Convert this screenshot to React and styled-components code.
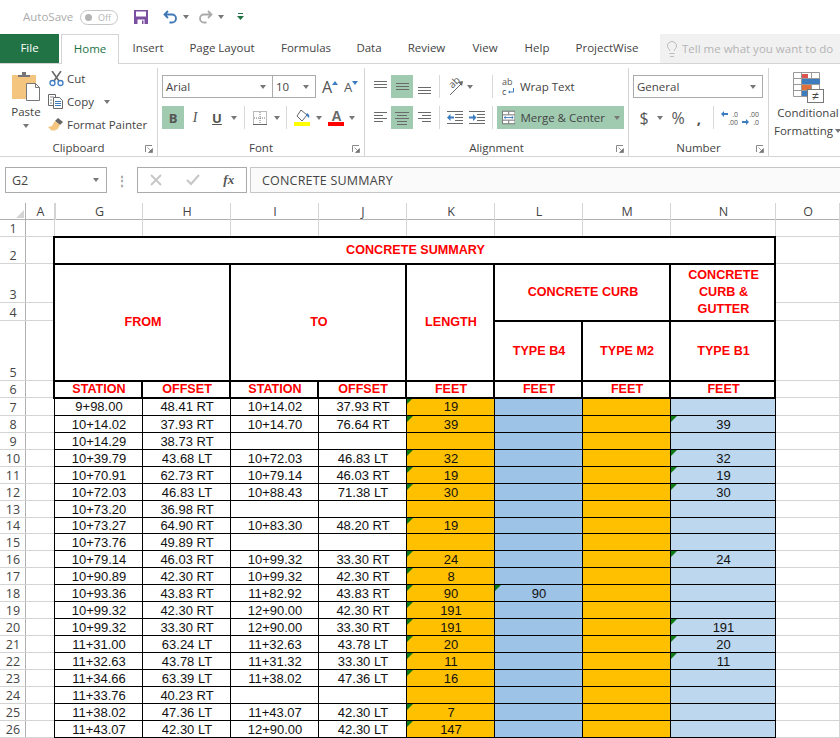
import React from 'react'
import styled, { createGlobalStyle } from 'styled-components'
import { Lightbulb } from 'lucide-react'

const GlobalStyle = createGlobalStyle`
  html, body {
    margin: 0;
    padding: 0;
    background: #fff;
    overflow: hidden;
  }
  body {
    font-family: "Open Sans", "Noto Sans", sans-serif;
    font-size: 11.5px;
    color: #444;
  }
`

const Page = styled.div`
  width: 840px;
  height: 738px;
  overflow: hidden;
  display: flex;
  flex-direction: column;
`

/* ---- quick access bar ---- */
const QuickBar = styled.div`
  height: 34px;
  display: flex;
  align-items: center;
  padding-left: 23px;
`
const AutoSave = styled.span`
  color: #ababab;
  font-size: 11.5px;
  width: 57px;
  padding-bottom: 2px;
`
const Toggle = styled.div`
  width: 38px;
  height: 15px;
  border: 1px solid #c6c6c6;
  border-radius: 8px;
  display: flex;
  align-items: center;
  justify-content: space-between;
  padding: 0 6px 0 4px;
  box-sizing: border-box;
  color: #b4b4b4;
  font-size: 9px;
  &::before {
    content: '';
    width: 7px;
    height: 7px;
    border-radius: 50%;
    background: #b4b4b4;
  }
`
const QuickIcon = styled.div`
  width: ${p => p.$w}px;
  margin-left: ${p => p.$ml || 0}px;
  display: flex;
  justify-content: center;
`

/* ---- tabs ---- */
const TabBar = styled.div`
  height: 30px;
  display: flex;
  box-sizing: border-box;
  border-bottom: 1px solid #d4d4d4;
`
const FileTab = styled.div`
  width: 59px;
  height: 29px;
  margin-right: 2px;
  padding-bottom: 2px;
  box-sizing: border-box;
  background: #217346;
  color: #fff;
  display: flex;
  align-items: center;
  justify-content: center;
`
const HomeTab = styled.div`
  width: 58px;
  height: 30px;
  padding-bottom: 2px;
  box-sizing: border-box;
  border: 1px solid #d4d4d4;
  border-bottom: none;
  background: #fff;
  color: #217346;
  display: flex;
  align-items: center;
  justify-content: center;
  margin-right: 1px;
`
const Tab = styled.div`
  width: ${p => p.$w}px;
  padding-bottom: 2px;
  box-sizing: border-box;
  display: flex;
  align-items: center;
  justify-content: center;
  color: #444;
  white-space: nowrap;
`
const TellMe = styled.div`
  margin-left: 9px;
  flex: 1;
  background: #f1f1f1;
  color: #b4b4b4;
  display: flex;
  align-items: center;
  gap: 1px;
  padding-left: 3px;
  white-space: nowrap;
  overflow: hidden;
`

/* ---- ribbon ---- */
const Ribbon = styled.div`
  height: 93px;
  box-sizing: border-box;
  display: flex;
  border-bottom: 1px solid #d4d4d4;
`
const Group = styled.div`
  position: relative;
  width: ${p => p.$w}px;
  box-sizing: border-box;
  height: 88px;
  margin-top: 4px;
  padding-left: ${p => p.$pl || 0}px;
  padding-top: ${p => p.$pt ?? 7}px;
  border-right: ${p => (p.$last ? 'none' : '1px solid #d4d4d4')};
  overflow: ${p => (p.$last ? 'hidden' : 'visible')};
`
const GroupLabel = styled.div`
  position: absolute;
  left: 0;
  right: 0;
  top: 72px;
  line-height: 16px;
  text-align: center;
  color: #444;
`
const Launcher = styled.svg`
  position: absolute;
  right: 4px;
  top: 77px;
`
const ClipBody = styled.div`
  display: flex;
`
const PasteCol = styled.div`
  width: 38px;
  margin-right: 3px;
  padding-top: 3px;
  display: flex;
  flex-direction: column;
  align-items: center;
`
const PasteText = styled.div`
  margin-top: 2px;
  line-height: 18px;
  margin-bottom: 3px;
`
const SmallCol = styled.div`
  display: flex;
  flex-direction: column;
`
const SmallItem = styled.div`
  height: 23px;
  padding-bottom: 2px;
  box-sizing: border-box;
  display: flex;
  align-items: center;
  gap: 3px;
  white-space: nowrap;
`
const SmallIcon = styled.div`
  width: 16px;
  display: flex;
  justify-content: center;
`
const Rows = styled.div`
  display: flex;
  flex-direction: column;
  gap: 8px;
`
const ToolRow = styled.div`
  height: 23px;
  display: flex;
  align-items: center;
`
const Combo = styled.div`
  width: ${p => p.$w}px;
  height: 23px;
  box-sizing: border-box;
  border: 1px solid #ababab;
  margin-left: ${p => p.$ml || 0}px;
  display: flex;
  align-items: center;
  justify-content: space-between;
  padding: 0 5px 0 3px;
  background: #fff;
`
const Tool = styled.div`
  width: ${p => p.$w || 22}px;
  height: 23px;
  margin-left: ${p => p.$ml || 0}px;
  display: flex;
  align-items: center;
  justify-content: center;
  flex-shrink: 0;
  background: ${p => (p.$active ? '#a0cbb1' : 'transparent')};
  color: #444;
  white-space: nowrap;
`
const LabelTool = styled(Tool)`
  justify-content: flex-start;
  gap: 5px;
  padding-left: 5px;
  box-sizing: border-box;
`
const Letter = styled.span`
  font-family: "Liberation Serif", "Noto Sans", serif;
  font-size: ${p => p.$size || 14}px;
  font-weight: ${p => (p.$bold ? 700 : 400)};
  font-style: ${p => (p.$italic ? 'italic' : 'normal')};
  text-decoration: ${p => (p.$under ? 'underline' : 'none')};
  color: #555;
`
const Sans = styled(Letter)`
  font-family: "Open Sans", "Noto Sans", sans-serif;
`
const Caret = styled.div`
  width: ${p => p.$w || 10}px;
  flex-shrink: 0;
  margin-left: ${p => p.$ml || 0}px;
  display: flex;
  justify-content: center;
  &::after {
    content: '';
    border-left: 3.5px solid transparent;
    border-right: 3.5px solid transparent;
    border-top: 4px solid #777;
  }
`
const Sep = styled.div`
  width: 1px;
  height: 23px;
  margin: 0 4px;
  background: #d9d9d9;
  flex-shrink: 0;
`
const Spacer = styled.div`
  width: ${p => p.$w}px;
  flex-shrink: 0;
`
const StylesCol = styled.div`
  display: flex;
  flex-direction: column;
  align-items: center;
  width: 78px;
`
const StylesLabel = styled.div`
  margin-top: 2px;
  line-height: 16px;
  white-space: nowrap;
  display: flex;
  align-items: center;
`

/* ---- formula bar ---- */
const FormulaBar = styled.div`
  margin-top: 10px;
  height: 26px;
  display: flex;
  padding-left: 5px;
`
const NameBox = styled.div`
  width: 102px;
  box-sizing: border-box;
  border: 1px solid #ababab;
  display: flex;
  align-items: center;
  justify-content: space-between;
  padding: 0 6px;
  font-size: 12.5px;
`
const Dots = styled.div`
  width: 30px;
  color: #a0a0a0;
  display: flex;
  align-items: center;
  justify-content: center;
  font-weight: 700;
`
const FxBox = styled.div`
  width: 110px;
  box-sizing: border-box;
  border: 1px solid #ababab;
  display: flex;
  align-items: center;
  justify-content: space-around;
  background: #fff;
`
const FormulaInput = styled.div`
  margin-left: 3px;
  flex: 1;
  box-sizing: border-box;
  border: 1px solid #c6c6c6;
  border-right: none;
  background: #fafafa;
  padding-left: 11px;
  display: flex;
  align-items: center;
  font-size: 12.5px;
  letter-spacing: 0.2px;
  color: #444;
`

/* ---- sheet ---- */
const Sheet = styled.div`
  margin-top: 10px;
  display: grid;
  grid-template-columns: 26px 29px repeat(7, 88px) 105px 64px;
  grid-template-rows: 17px 17px 27px 39px 18px 60px 17px 18px repeat(6, 17px) 16px repeat(12, 17px);
  font-family: "Liberation Sans", Arial, sans-serif;
  font-size: 13px;
  color: #111;
`
const Corner = styled.div`
  position: relative;
  box-shadow: inset -1px -1px 0 #b0b0b0;
  &::after {
    content: '';
    position: absolute;
    right: 2px;
    bottom: 2px;
    border-left: 8px solid transparent;
    border-bottom: 8px solid #d4d4d4;
  }
`
const ColHead = styled.div`
  display: flex;
  align-items: center;
  justify-content: center;
  font-family: "Open Sans", "Noto Sans", sans-serif;
  font-size: 12.5px;
  color: #444;
  box-shadow: inset -1px 0 0 #d4d4d4, inset 0 -1px 0 #b0b0b0;
  ${p => p.$hidden && 'border-left: 1px solid #d4d4d4;'}
`
const RowHead = styled.div`
  display: flex;
  align-items: flex-end;
  justify-content: center;
  font-family: "Open Sans", "Noto Sans", sans-serif;
  font-size: 12.5px;
  line-height: 16px;
  color: #444;
  box-shadow: inset 0 -1px 0 #d4d4d4, inset -1px 0 0 #b0b0b0;
`
const Blank = styled.div`
  box-shadow: inset -1px -1px 0 #d4d4d4;
`
const HeadCell = styled.div`
  grid-column: ${p => p.$col};
  grid-row: ${p => p.$row};
  position: relative;
  z-index: 1;
  display: flex;
  align-items: center;
  justify-content: center;
  text-align: center;
  color: #ff0000;
  font-weight: 700;
  font-size: 12.6px;
  line-height: 17px;
  background: #fff;
  box-shadow: -1px 0 0 1px #000, inset -2px 0 0 #000, inset 0 1px 0 #000, inset 0 -1px 0 #000;
`
const DataCell = styled.div`
  position: relative;
  display: flex;
  align-items: center;
  justify-content: center;
  background: ${p => p.$bg || '#fff'};
  box-shadow: inset -1px -1px 0 #000 ${p => (p.$first ? ', -1px 0 0 #000' : '')};
  padding-bottom: 1px;
  box-sizing: border-box;
  white-space: nowrap;
  ${p => p.$flag && `
    &::before {
      content: '';
      position: absolute;
      left: 0;
      top: 0;
      border-top: 6px solid #0e7a16;
      border-right: 6px solid transparent;
    }
  `}
`

const ORANGE = '#ffc000'
const BLUE = '#9dc3e6'
const PALE = '#bdd7ee'

const rows = [
  [7, '9+98.00', '48.41 RT', '10+14.02', '37.93 RT', '19', '', ''],
  [8, '10+14.02', '37.93 RT', '10+14.70', '76.64 RT', '39', '', '39'],
  [9, '10+14.29', '38.73 RT', '', '', '', '', ''],
  [10, '10+39.79', '43.68 LT', '10+72.03', '46.83 LT', '32', '', '32'],
  [11, '10+70.91', '62.73 RT', '10+79.14', '46.03 RT', '19', '', '19'],
  [12, '10+72.03', '46.83 LT', '10+88.43', '71.38 LT', '30', '', '30'],
  [13, '10+73.20', '36.98 RT', '', '', '', '', ''],
  [14, '10+73.27', '64.90 RT', '10+83.30', '48.20 RT', '19', '', ''],
  [15, '10+73.76', '49.89 RT', '', '', '', '', ''],
  [16, '10+79.14', '46.03 RT', '10+99.32', '33.30 RT', '24', '', '24'],
  [17, '10+90.89', '42.30 RT', '10+99.32', '42.30 RT', '8', '', ''],
  [18, '10+93.36', '43.83 RT', '11+82.92', '43.83 RT', '90', '90', ''],
  [19, '10+99.32', '42.30 RT', '12+90.00', '42.30 RT', '191', '', ''],
  [20, '10+99.32', '33.30 RT', '12+90.00', '33.30 RT', '191', '', '191'],
  [21, '11+31.00', '63.24 LT', '11+32.63', '43.78 LT', '20', '', '20'],
  [22, '11+32.63', '43.78 LT', '11+31.32', '33.30 LT', '11', '', '11'],
  [23, '11+34.66', '63.39 LT', '11+38.02', '47.36 LT', '16', '', ''],
  [24, '11+33.76', '40.23 RT', '', '', '', '', ''],
  [25, '11+38.02', '47.36 LT', '11+43.07', '42.30 LT', '7', '', ''],
  [26, '11+43.07', '42.30 LT', '12+90.00', '42.30 LT', '147', '', ''],
]

const LauncherIcon = () => (
  <Launcher width="8" height="8" viewBox="0 0 8 8">
    <path d="M.5 7V.5H7" fill="none" stroke="#888" />
    <path d="M2.5 2.5L6 6M7.5 3.5v4h-4z" fill="#777" stroke="#777" strokeWidth=".7" />
  </Launcher>
)

// horizontal text lines used by the alignment buttons
const AlignIcon = ({ lines }) => (
  <svg width="16" height="16" viewBox="0 0 16 16">
    {lines.map(([x1, x2, y]) => (
      <rect key={y} x={x1} y={y} width={x2 - x1} height="1" fill="#6a6a6a" />
    ))}
  </svg>
)

const PasteIcon = () => (
  <svg width="30" height="30" viewBox="0 0 30 30">
    <rect x="1" y="4" width="24" height="24" fill="#f4c57f" />
    <path d="M7 6V4h4V1h4v3h4v2z" fill="#767676" />
    <path d="M15.500 12.500h9l4 4v13h-13z" fill="#fff" stroke="#767676" />
    <path d="M24.500 12.500v4h4" fill="none" stroke="#767676" />
  </svg>
)
const CutIcon = () => (
  <svg width="15" height="16" viewBox="0 0 15 16">
    <path d="M3 0l7 10M12 0L5 10" stroke="#6a6a6a" strokeWidth="1.600" />
    <circle cx="3.500" cy="12" r="2.500" fill="none" stroke="#3e7cc0" strokeWidth="1.300" />
    <circle cx="11.500" cy="12" r="2.500" fill="none" stroke="#3e7cc0" strokeWidth="1.300" />
  </svg>
)
const CopyIcon = () => (
  <svg width="16" height="15" viewBox="0 0 16 15">
    <path d="M.5.500h7v3M5 11.500H.5V.500" fill="none" stroke="#6a6a6a" />
    <path d="M5.500 3.500h6l3 3v8h-9z" fill="#fff" stroke="#6a6a6a" />
    <path d="M2 3h4M2 6h2M2 9h2" stroke="#8a8a8a" />
    <path d="M7 7.500h6M7 9.500h6M7 11.500h6" stroke="#3e7cc0" />
  </svg>
)
const PainterIcon = () => (
  <svg width="16" height="15" viewBox="0 0 16 15">
    <path d="M10 1l5 4-3 3-5-4z" fill="#666" />
    <path d="M7 4l5 4-3 5-1-1-1 2-2-1-1 1-4-4 4-1 1-2z" fill="#f4c57f" />
  </svg>
)
const BorderIcon = () => (
  <svg width="14" height="14" viewBox="0 0 14 14">
    <path d="M.5.500h13v13H.5zM7 1v12M1 7h12" fill="none" stroke="#777" strokeDasharray="1 1" />
    <path d="M0 13.500h14" stroke="#666" />
  </svg>
)
const FillIcon = () => (
  <svg width="17" height="17" viewBox="0 0 17 17">
    <path d="M7 1l6 5-5 6-5-5z" fill="#fff" stroke="#666" />
    <path d="M13 4c2 1 3 3 2 5-1-1-2-2-3-3z" fill="#3e7cc0" />
    <rect x="0" y="13" width="16" height="4" fill="#ffff00" />
  </svg>
)
const ColorIcon = () => (
  <svg width="17" height="17" viewBox="0 0 17 17">
    <text x="8.500" y="12" textAnchor="middle" fontFamily="Liberation Sans" fontSize="14" fontWeight="700" fill="#666">A</text>
    <rect x="0" y="13" width="16" height="4" fill="#ff0000" />
  </svg>
)
const OrientIcon = () => (
  <svg width="20" height="20" viewBox="0 0 20 20" overflow="visible">
    <text x="6" y="10" transform="rotate(-45 9 9)" fontFamily="Open Sans" fontSize="10" fill="#555">ab</text>
    <path d="M5 18L17 6" stroke="#666" />
    <path d="M18 4l-1 5-4-4z" fill="#666" />
  </svg>
)
const WrapIcon = () => (
  <svg width="13" height="20" viewBox="0 0 13 20">
    <text x="0" y="8" fontFamily="Open Sans" fontSize="9" fill="#555">ab</text>
    <text x="0" y="18" fontFamily="Open Sans" fontSize="9" fill="#555">c</text>
    <path d="M11.500 11v4H7" fill="none" stroke="#3e7cc0" />
    <path d="M6 15l2-1.500v3z" fill="#3e7cc0" />
  </svg>
)
const MergeIcon = () => (
  <svg width="15" height="15" viewBox="0 0 15 15">
    <path d="M.5.500h14v14H.5zM1 4.500h13M1 10.500h13M7.500 1v3M7.500 11v3" fill="#fff" stroke="#666" />
    <path d="M3 7.500h9" stroke="#3e7cc0" />
    <path d="M2 7.500l2-2v4zM13 7.500l-2-2v4z" fill="#3e7cc0" />
  </svg>
)
const IndentIcon = ({ flip }) => (
  <svg width="16" height="14" viewBox="0 0 16 14">
    <path d="M0 .5h16M8 3.500h8M8 6.500h8M8 9.500h8M0 12.500h16" stroke="#6a6a6a" />
    {flip
      ? <path d="M0 5.500h4V3l3.500 3.500L4 10V7.500H0z" fill="#3e7cc0" />
      : <path d="M7 5.500H3.500V3L0 6.500 3.500 10V7.500H7z" fill="#3e7cc0" />}
  </svg>
)
const DecimalIcon = ({ more }) => (
  <svg width="17" height="18" viewBox="0 0 17 18">
    <text x="17" y="8" textAnchor="end" fontFamily="Open Sans" fontSize="7" fill="#555">{more ? '.0' : '.00'}</text>
    <text x="17" y="16" textAnchor="end" fontFamily="Open Sans" fontSize="7" fill="#555">{more ? '.00' : '.0'}</text>
    {more
      ? <path d="M0 5l3-3v2h4v2H3v2z" fill="#3e7cc0" />
      : <path d="M7 13l-3-3v2H0v2h4v2z" fill="#3e7cc0" />}
  </svg>
)
const ConditionalIcon = () => (
  <svg width="31" height="31" viewBox="0 0 31 31">
    <path d="M.5.500h26v24H.5zM.5 6.500h26M.5 12.500h26M.5 18.500h26M8.500 1v24M18.500 1v24" fill="#fff" stroke="#999" />
    <rect x="9" y="2" width="6" height="4" fill="#d9534f" />
    <rect x="9" y="7" width="18" height="5" fill="#3e7cc0" />
    <rect x="9" y="13" width="9" height="5" fill="#e0703c" />
    <rect x="9" y="19" width="5" height="5" fill="#3e7cc0" />
    <rect x="14.500" y="17.500" width="16" height="13" fill="#fff" stroke="#777" />
    <text x="22.500" y="28" textAnchor="middle" fontFamily="Liberation Sans" fontSize="12" fill="#444">≠</text>
  </svg>
)

function App() {
  return (
    <Page>
      <GlobalStyle />
      <QuickBar>
        <AutoSave>AutoSave</AutoSave>
        <Toggle>Off</Toggle>
        <QuickIcon $w={14} $ml={16}>
          <svg width="14" height="14" viewBox="0 0 14 14">
            <path d="M0 0h14v14H0z" fill="#7b4f9f" />
            <path d="M2 1.500h10v5H2zM3.500 9.500h7V14h-7z" fill="#fff" />
            <path d="M8 10.500h1.500V14H8z" fill="#7b4f9f" />
          </svg>
        </QuickIcon>
        <QuickIcon $w={16} $ml={14}>
          <svg width="15" height="15" viewBox="0 0 15 15">
            <path d="M5 1L1.500 4.500 5 8M2 4.500h7a4 4 0 0 1 0 8H6.500" fill="none" stroke="#3f78b5" strokeWidth="1.800" />
          </svg>
        </QuickIcon>
        <Caret $w={10} $ml={3} />
        <QuickIcon $w={16} $ml={6}>
          <svg width="15" height="15" viewBox="0 0 15 15">
            <path d="M10 1l3.500 3.500L10 8M13 4.500H6a4 4 0 0 0 0 8h2.500" fill="none" stroke="#ababab" strokeWidth="1.800" />
          </svg>
        </QuickIcon>
        <Caret $w={10} $ml={3} />
        <QuickIcon $w={10} $ml={9}>
          <svg width="7" height="8" viewBox="0 0 7 8">
            <path d="M1 0h5v1H1zM0 3h7L3.500 7z" fill="#217346" />
          </svg>
        </QuickIcon>
      </QuickBar>

      <TabBar>
        <FileTab>File</FileTab>
        <HomeTab>Home</HomeTab>
        <Tab $w={56}>Insert</Tab>
        <Tab $w={92}>Page Layout</Tab>
        <Tab $w={76}>Formulas</Tab>
        <Tab $w={50}>Data</Tab>
        <Tab $w={65}>Review</Tab>
        <Tab $w={52}>View</Tab>
        <Tab $w={52}>Help</Tab>
        <Tab $w={88}>ProjectWise</Tab>
        <TellMe>
          <Lightbulb size={18} strokeWidth={1} color="#a8a8a8" />
          Tell me what you want to do
        </TellMe>
      </TabBar>

      <Ribbon>
        <Group $w={158} $pl={7} $pt={0}>
          <ClipBody>
            <PasteCol>
              <PasteIcon />
              <PasteText>Paste</PasteText>
              <Caret />
            </PasteCol>
            <SmallCol>
              <SmallItem><SmallIcon><CutIcon /></SmallIcon>Cut</SmallItem>
              <SmallItem><SmallIcon><CopyIcon /></SmallIcon>Copy<Caret $w={20} /></SmallItem>
              <SmallItem><SmallIcon><PainterIcon /></SmallIcon>Format Painter</SmallItem>
            </SmallCol>
          </ClipBody>
          <GroupLabel>Clipboard</GroupLabel>
          <LauncherIcon />
        </Group>

        <Group $w={207} $pl={4}>
          <Rows>
            <ToolRow>
              <Combo $w={111}>Arial<Caret $w={8} /></Combo>
              <Combo $w={44} $ml={-1}>10<Caret $w={8} /></Combo>
              <Tool $w={22} $ml={3}>
                <Sans $size={16}>A</Sans>
                <svg width="6" height="12" viewBox="0 0 6 12"><path d="M0 4l3-4 3 4z" fill="#3e7cc0" /></svg>
              </Tool>
              <Tool $w={20}>
                <Sans $size={13}>A</Sans>
                <svg width="6" height="12" viewBox="0 0 6 12"><path d="M0 0l3 4 3-4z" fill="#3e7cc0" /></svg>
              </Tool>
            </ToolRow>
            <ToolRow>
              <Tool $active><Sans $size={13} $bold>B</Sans></Tool>
              <Tool><Letter $size={14} $italic>I</Letter></Tool>
              <Tool><Sans $size={13} $under $bold>U</Sans></Tool>
              <Caret $w={12} />
              <Sep />
              <Tool><BorderIcon /></Tool>
              <Caret $w={11} />
              <Sep />
              <Tool><FillIcon /></Tool>
              <Caret $w={12} />
              <Tool><ColorIcon /></Tool>
              <Caret $w={10} />
            </ToolRow>
          </Rows>
          <GroupLabel>Font</GroupLabel>
          <LauncherIcon />
        </Group>

        <Group $w={264} $pl={4}>
          <Rows>
            <ToolRow>
              <Tool><AlignIcon lines={[[2, 15, 2], [2, 15, 5], [2, 15, 8]]} /></Tool>
              <Tool $active><AlignIcon lines={[[2, 15, 4], [2, 15, 7], [2, 15, 10]]} /></Tool>
              <Tool><AlignIcon lines={[[2, 15, 8], [2, 15, 11], [2, 15, 14]]} /></Tool>
              <Sep />
              <Tool><OrientIcon /></Tool>
              <Caret $w={7} />
              <Spacer $w={15} />
              <Sep />
              <LabelTool $w={90}><WrapIcon />Wrap Text</LabelTool>
            </ToolRow>
            <ToolRow>
              <Tool><AlignIcon lines={[[2, 15, 2], [2, 11, 5], [2, 15, 8], [2, 11, 11]]} /></Tool>
              <Tool $active><AlignIcon lines={[[1, 15, 2], [3, 13, 5], [1, 15, 8], [3, 13, 11], [3, 13, 14]]} /></Tool>
              <Tool><AlignIcon lines={[[2, 15, 2], [6, 15, 5], [2, 15, 8], [6, 15, 11]]} /></Tool>
              <Sep />
              <Tool><IndentIcon /></Tool>
              <Tool><IndentIcon flip /></Tool>
              <Sep />
              <LabelTool $w={127} $active>
                <MergeIcon />Merge &amp; Center<Caret $w={14} />
              </LabelTool>
            </ToolRow>
          </Rows>
          <GroupLabel>Alignment</GroupLabel>
          <LauncherIcon />
        </Group>

        <Group $w={140} $pl={4}>
          <Rows>
            <ToolRow>
              <Combo $w={130}>General<Caret $w={8} /></Combo>
            </ToolRow>
            <ToolRow>
              <Tool><Sans $size={16}>$</Sans></Tool>
              <Caret $w={10} />
              <Spacer $w={2} />
              <Tool><Sans $size={16}>%</Sans></Tool>
              <Tool $w={20}><Sans $size={15} $bold>,</Sans></Tool>
              <Sep />
              <Spacer $w={1} />
              <Tool $w={21}><DecimalIcon more /></Tool>
              <Tool $w={21}><DecimalIcon /></Tool>
            </ToolRow>
          </Rows>
          <GroupLabel>Number</GroupLabel>
          <LauncherIcon />
        </Group>

        <Group $w={71} $pt={4} $last>
          <StylesCol>
            <ConditionalIcon />
            <StylesLabel>Conditional</StylesLabel>
            <StylesLabel>Formatting<Caret $w={9} /></StylesLabel>
          </StylesCol>
        </Group>
      </Ribbon>

      <FormulaBar>
        <NameBox>G2<Caret $w={8} /></NameBox>
        <Dots>⋮</Dots>
        <FxBox>
          <svg width="12" height="12" viewBox="0 0 12 12"><path d="M1 1l10 10M11 1L1 11" stroke="#c6c6c6" strokeWidth="1.800" /></svg>
          <svg width="14" height="12" viewBox="0 0 14 12"><path d="M1 6l4 4 8-9" fill="none" stroke="#c6c6c6" strokeWidth="2" /></svg>
          <Letter $size={13} $italic $bold>fx</Letter>
        </FxBox>
        <FormulaInput>CONCRETE SUMMARY</FormulaInput>
      </FormulaBar>

      <Sheet>
        <Corner />
        {['A', 'G', 'H', 'I', 'J', 'K', 'L', 'M', 'N', 'O'].map(l => (
          <ColHead key={l} $hidden={l === 'G'}>{l}</ColHead>
        ))}

        <RowHead>1</RowHead>
        {Array.from({ length: 10 }, (_, i) => <Blank key={i} />)}

        <HeadCell $col="3 / 11" $row="3">CONCRETE SUMMARY</HeadCell>
        <HeadCell $col="3 / 5" $row="4 / 7">FROM</HeadCell>
        <HeadCell $col="5 / 7" $row="4 / 7">TO</HeadCell>
        <HeadCell $col="7" $row="4 / 7">LENGTH</HeadCell>
        <HeadCell $col="8 / 10" $row="4 / 6">CONCRETE CURB</HeadCell>
        <HeadCell $col="10" $row="4 / 6">CONCRETE<br />CURB &amp;<br />GUTTER</HeadCell>
        <HeadCell $col="8" $row="6">TYPE B4</HeadCell>
        <HeadCell $col="9" $row="6">TYPE M2</HeadCell>
        <HeadCell $col="10" $row="6">TYPE B1</HeadCell>
        <HeadCell $col="3" $row="7">STATION</HeadCell>
        <HeadCell $col="4" $row="7">OFFSET</HeadCell>
        <HeadCell $col="5" $row="7">STATION</HeadCell>
        <HeadCell $col="6" $row="7">OFFSET</HeadCell>
        <HeadCell $col="7" $row="7">FEET</HeadCell>
        <HeadCell $col="8" $row="7">FEET</HeadCell>
        <HeadCell $col="9" $row="7">FEET</HeadCell>
        <HeadCell $col="10" $row="7">FEET</HeadCell>

        {[2, 3, 4, 5, 6].map(n => (
          <React.Fragment key={n}>
            <RowHead>{n}</RowHead>
            <Blank />
            <Blank />
          </React.Fragment>
        ))}

        {rows.map(([n, g, h, i, j, k, l, nn]) => (
          <React.Fragment key={n}>
            <RowHead>{n}</RowHead>
            <Blank />
            <DataCell $first>{g}</DataCell>
            <DataCell>{h}</DataCell>
            <DataCell>{i}</DataCell>
            <DataCell>{j}</DataCell>
            <DataCell $bg={ORANGE} $flag={!!k}>{k}</DataCell>
            <DataCell $bg={BLUE} $flag={!!l}>{l}</DataCell>
            <DataCell $bg={ORANGE} />
            <DataCell $bg={PALE} $flag={!!nn}>{nn}</DataCell>
            <Blank />
          </React.Fragment>
        ))}
      </Sheet>
    </Page>
  )
}

export default App
